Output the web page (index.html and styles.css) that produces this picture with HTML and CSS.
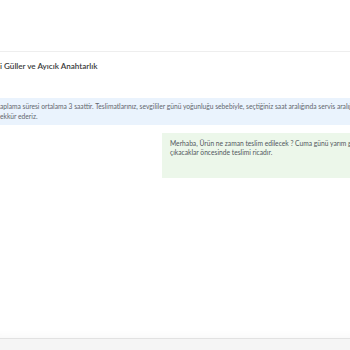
FILE: index.html
```html
<!DOCTYPE html>
<html lang="tr">
<head>
<meta charset="utf-8">
<link rel="stylesheet" href="styles.css">
</head>
<body>
<div class="page">
  <div class="topbar"></div>
  <div class="title">i Güller ve Ayıcık Anahtarlık</div>
  <div class="chat">
    <div class="notice">aplama süresi ortalama 3 saattir. Teslimatlarınız, sevgililer günü yoğunluğu sebebiyle, seçtiğiniz saat aralığında servis aralığı<br>ekkür ederiz.</div>
    <div class="bubble-row">
      <div class="bubble">Merhaba, Ürün ne zaman teslim edilecek ? Cuma günü yarım gün<br>çıkacaklar öncesinde teslimi ricadır.</div>
    </div>
  </div>
  <div class="footer"></div>
</div>
</body>
</html>
```
FILE: styles.css
```css
html, body {
  margin: 0;
  padding: 0;
  background: #ffffff;
}
.page {
  width: 350px;
  height: 350px;
  display: flex;
  flex-direction: column;
  overflow: hidden;
  font-family: Lato, "Noto Sans", sans-serif;
}
.topbar {
  height: 51px;
  flex: none;
  border-bottom: 1px solid #eeeeee;
}
.title {
  flex: none;
  padding: 9px 0 0 0;
  font-size: 8.1px;
  line-height: 10px;
  font-weight: 600;
  color: #3a3a3a;
  white-space: nowrap;
}
.chat {
  flex: 1;
  display: flex;
  flex-direction: column;
  padding-top: 27px;
  box-shadow: inset 0 -10px 8px -8px rgba(0,0,0,0.03);
}
.notice {
  background: #eaf3fd;
  color: #62676d;
  font-size: 6.7px;
  line-height: 9.5px;
  padding: 4px 0 4px 0;
  white-space: nowrap;
  overflow: hidden;
}
.bubble-row {
  display: flex;
  padding-top: 8px;
  padding-left: 162px;
}
.bubble {
  flex: 1;
  background: #ecf7ea;
  color: #52585e;
  font-size: 6.7px;
  line-height: 9px;
  padding: 6px 0 21px 8px;
  white-space: nowrap;
  overflow: hidden;
}
.footer {
  flex: none;
  height: 11px;
  border-top: 1px solid #e2e2e2;
  background: #f5f5f5;
}
```
